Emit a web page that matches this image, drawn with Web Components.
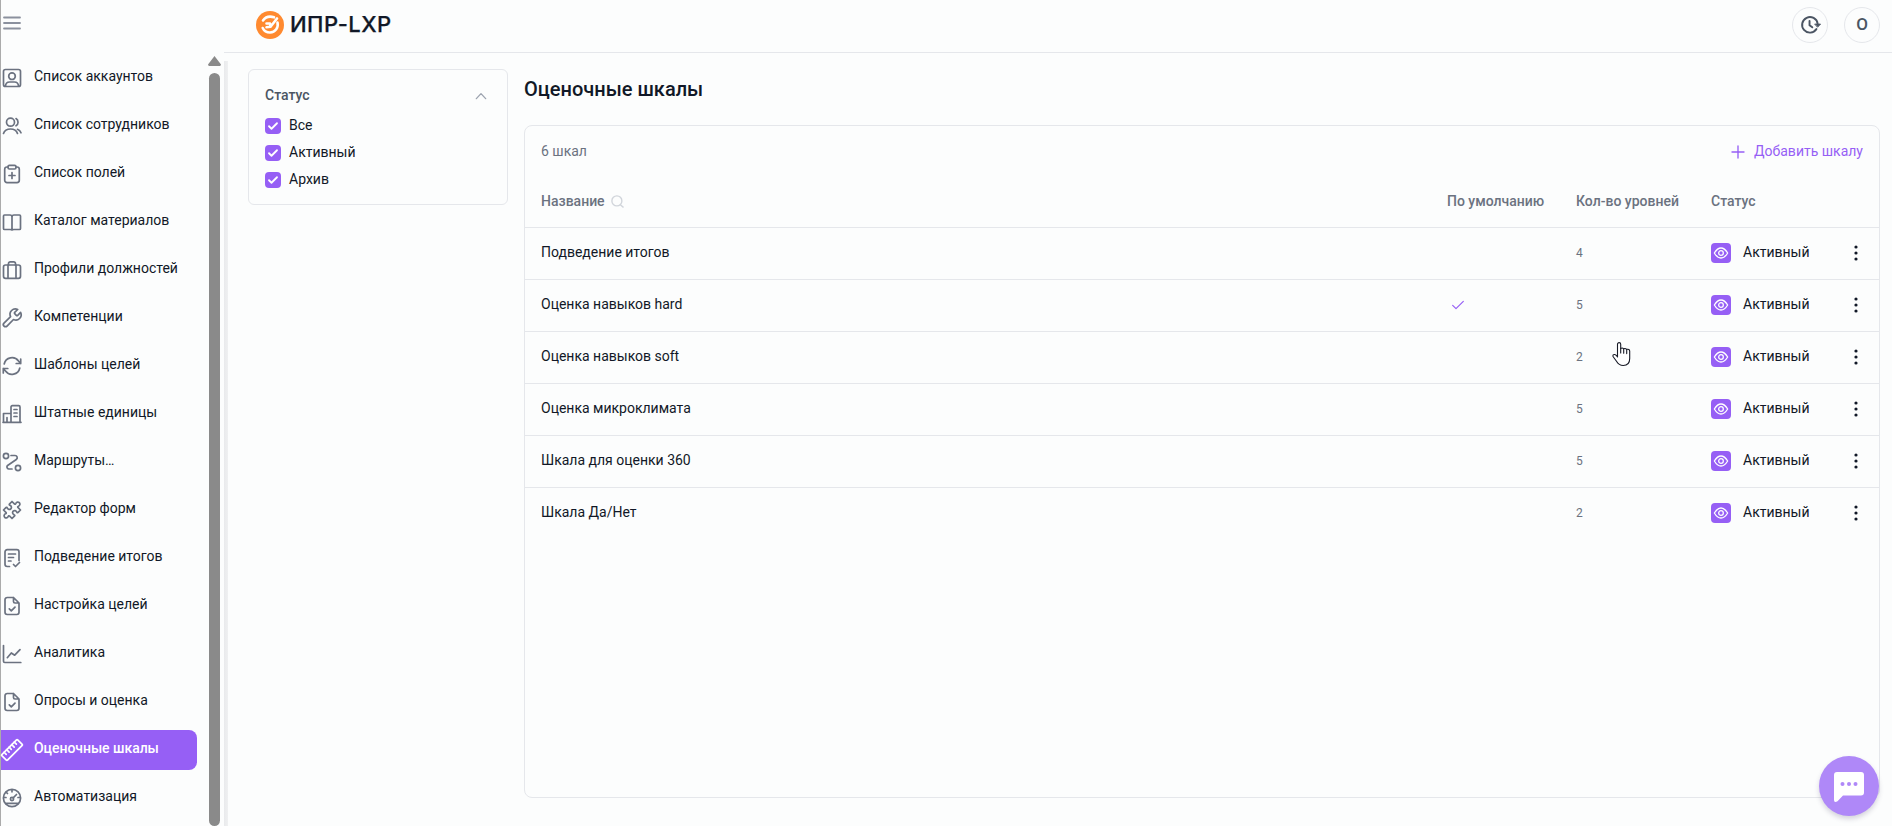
<!DOCTYPE html>
<html lang="ru">
<head>
<meta charset="UTF-8">
<title>ИПР-LXP</title>
<style>
    html, body { margin: 0; height: 100%; }
    body {
        --accent: #965ff5;
        --line: #e5e7eb;
        --text: #111827;
        --muted: #6b7280;
        background: #fcfdfd;
        color: var(--text);
        font: 14px/20px Roboto, sans-serif;
        overflow: hidden;
    }
</style>
</head>
<body>
<lxp-app>
    <lxp-sidebar slot="sidebar">
        <nav-item icon="account">Список аккаунтов</nav-item>
        <nav-item icon="users">Список сотрудников</nav-item>
        <nav-item icon="clipboard">Список полей</nav-item>
        <nav-item icon="book">Каталог материалов</nav-item>
        <nav-item icon="suitcase">Профили должностей</nav-item>
        <nav-item icon="wrench">Компетенции</nav-item>
        <nav-item icon="refresh">Шаблоны целей</nav-item>
        <nav-item icon="building">Штатные единицы</nav-item>
        <nav-item icon="route">Маршруты…</nav-item>
        <nav-item icon="puzzle">Редактор форм</nav-item>
        <nav-item icon="report">Подведение итогов</nav-item>
        <nav-item icon="file">Настройка целей</nav-item>
        <nav-item icon="chart">Аналитика</nav-item>
        <nav-item icon="file">Опросы и оценка</nav-item>
        <nav-item icon="ruler" active>Оценочные шкалы</nav-item>
        <nav-item icon="gauge">Автоматизация</nav-item>
    </lxp-sidebar>
    <lxp-header slot="header">ИПР-LXP</lxp-header>
    <filter-card slot="filter" label="Статус">
        <check-option>Все</check-option>
        <check-option>Активный</check-option>
        <check-option>Архив</check-option>
    </filter-card>
    <scale-table>
        <scale-row levels="4">Подведение итогов</scale-row>
        <scale-row levels="5" default>Оценка навыков hard</scale-row>
        <scale-row levels="2">Оценка навыков soft</scale-row>
        <scale-row levels="5">Оценка микроклимата</scale-row>
        <scale-row levels="5">Шкала для оценки 360</scale-row>
        <scale-row levels="2">Шкала Да/Нет</scale-row>
    </scale-table>
</lxp-app>
<chat-button></chat-button>
<hand-cursor></hand-cursor>

<script>
const ICONS = {
    menu: '<path d="M4 6.500h16M4 12h16M4 17.500h16"/>',
    account: '<rect x="3.5" y="3.5" width="17" height="17" rx="2"/><circle cx="12" cy="10.2" r="3.3"/><path d="M5.5 20c.2-2.400 1.800-4 4-4h5c2.200 0 3.800 1.600 4 4"/>',
    users: '<circle cx="10.500" cy="8.200" r="4"/><path d="M16 4.600a4.200 4.200 0 0 1 0 7.200M3.500 19.500c1-3 3.700-4.500 7-4.500s6 1.500 7 4.500M17.500 15.300c1.700.6 2.800 1.700 3.500 3.500"/>',
    clipboard: '<path d="M8 5H7a2.300 2.300 0 0 0-2.300 2.300v11A2.300 2.300 0 0 0 7 20.600h10a2.300 2.300 0 0 0 2.300-2.300v-11A2.300 2.300 0 0 0 17 5h-1"/><rect x="8" y="3.400" width="8" height="3.600" rx="1.400"/><path d="M12 10.500v6M9 13.500h6"/>',
    book: '<path d="M12 7c0-1.200-.9-2-2-2H4.500a1 1 0 0 0-1 1v12.500a1 1 0 0 0 1 1H10c1.200 0 2 .2 2 .5 0-.3.800-.5 2-.5h5.500a1 1 0 0 0 1-1V6a1 1 0 0 0-1-1H14c-1.100 0-2 .8-2 2zm0 0v12.500"/>',
    suitcase: '<rect x="3.500" y="7" width="17" height="13.300" rx="2"/><path d="M8.500 7V5.500a1.700 1.700 0 0 1 1.700-1.700h3.600a1.700 1.700 0 0 1 1.700 1.700V7M8 7v13M16 7v13"/>',
    wrench: '<path d="M14.700 6.300a1 1 0 0 0 0 1.400l1.600 1.600a1 1 0 0 0 1.400 0l2.900-2.900a5.300 5.300 0 0 1-7.100 7.100l-6.500 6.600a2.050 2.050 0 0 1-3-3l6.600-6.500a5.300 5.300 0 0 1 7.100-7.100z"/>',
    refresh: '<path d="M20.700 5v4.500h-4.500M3.300 19v-4.500h4.500M4.200 10A8 8 0 0 1 18.500 7l2.200 2.500M3.300 14.500L5.500 17a8 8 0 0 0 14.300-3"/>',
    building: '<path d="M3.500 20.300V11.500h7M3 20.300h18M11 20.300V5a1.300 1.300 0 0 1 1.300-1.300h6.400A1.300 1.300 0 0 1 20 5v15.300M7 20v-4.500M14 7.500h3M14 11h3M14 14.500h3"/>',
    route: '<circle cx="6" cy="6" r="2.600"/><circle cx="18" cy="18" r="2.600"/><path d="M11 5.500h4a2.200 2.200 0 0 1 1.300 4l-8.700 6a2 2 0 0 0 1.100 3.500H12"/>',
    puzzle: '<path transform="rotate(45 12 12)" d="M6 6H9.700q.8-.2.4-1.300a2.100 2.100 0 1 1 3.800 0q-.4 1.100.4 1.300H18V9.700q-.2.8-1.300.4a2.100 2.100 0 1 0 0 3.800q1.100-.4 1.300.4V18H14.300q-.8.2-.4 1.300a2.100 2.100 0 1 1-3.800 0q.4-1.100-.4-1.300H6V14.300q.2-.8 1.300-.4a2.100 2.100 0 1 0 0-3.800q-1.100.4-1.300-.4z"/>',
    report: '<path d="M9.500 20.500H7.200A2.200 2.200 0 0 1 5 18.300V5.900a2.200 2.200 0 0 1 2.200-2.200h9.600A2.200 2.200 0 0 1 19 5.900v8.600M8.500 8h7M8.500 11.500h5M8.500 15h2.500M13.500 18.500l2 2 4-4"/>',
    file: '<path d="M13.500 3.500H7.200A2.200 2.200 0 0 0 5 5.700v12.600a2.200 2.200 0 0 0 2.200 2.200h9.600a2.200 2.200 0 0 0 2.200-2.200V9l-5.500-5.500V7.500A1.500 1.500 0 0 0 15 9h4M9.300 14.800l2 2 3.700-3.700"/>',
    chart: '<path d="M3.500 3.500v15.700a1.300 1.300 0 0 0 1.300 1.300h16M7.300 15.700l4-4.700 3.400 2.200 5.300-5.600"/>',
    ruler: '<g transform="rotate(-45 12 12)"><rect x=".8" y="8" width="22.400" height="8" rx=".8"/><path d="M4.800 8v3M8.400 8v3.500M12 8v3M15.600 8v3.500M19.200 8v3"/></g>',
    gauge: '<circle cx="12" cy="12" r="8.600"/><circle cx="12" cy="13" r="1.600"/><path d="M13.200 11.800l3.300-3.300M12 3.800v2M4 11.500h2M18 11.500h2M6.300 6.300l1.200 1.200M6.500 17.300h11"/>',
    chevron: '<path d="M5 16l7-7.500 7 7.500"/>',
    search: '<circle cx="11" cy="11" r="8"/><path d="M17 17.500l4 3.500"/>',
    plus: '<path d="M12 4v16M4 12h16"/>',
    check: '<path d="M4 12.500l5 5L20 6.500"/>',
    eye: '<path d="M2 12c3-5 6.300-7.500 10-7.500S19 7 22 12c-3 5-6.300 7.500-10 7.500S5 17 2 12z"/><circle cx="12" cy="12" r="3.500"/>',
    clock: '<path d="M19 16.500A8.500 8.500 0 1 1 20.300 10.500M11.500 7.500v4.700l3 2.300"/><path fill="currentColor" stroke-width="1" d="M17.500 11h6l-3 3.200z"/>'
};

function icon(name, size = 24, width = 1.7) {
    return `<svg width="${size}" height="${size}" viewBox="0 0 24 24" fill="none" stroke="currentColor" stroke-width="${width}" stroke-linecap="round" stroke-linejoin="round">${ICONS[name]}</svg>`;
}

class LxpApp extends HTMLElement {
    constructor() {
        super();
        this.attachShadow({ mode: 'open' });
        this.shadowRoot.innerHTML = `
            <style>
                :host {
                    display: grid;
                    grid-template-columns: 223px 1fr;
                    height: 100vh;
                    border-left: 1px solid #ababab;
                    box-sizing: border-box;
                }
                .page { display: flex; flex-direction: column; min-width: 0; }
                .body { flex: 1; display: flex; min-height: 0; }
                .edge {
                    width: 4px;
                    margin-top: 8px;
                    background: linear-gradient(90deg, #e9eaec, #eff0f1);
                }
                .content { flex: 1; display: flex; gap: 16px; padding: 16px 12px 28px 20px; }
                .main { flex: 1; display: flex; flex-direction: column; }
                h1 {
                    margin: 0;
                    padding: 7px 0 22px;
                    font-size: 20px;
                    line-height: 27px;
                    font-weight: 500;
                }
            </style>
            <slot name="sidebar"></slot>
            <div class="page">
                <slot name="header"></slot>
                <div class="body">
                    <div class="edge"></div>
                    <div class="content">
                        <slot name="filter"></slot>
                        <div class="main">
                            <h1>Оценочные шкалы</h1>
                            <slot></slot>
                        </div>
                    </div>
                </div>
            </div>
        `;
    }
}

class LxpSidebar extends HTMLElement {
    constructor() {
        super();
        this.attachShadow({ mode: 'open' });
        this.shadowRoot.innerHTML = `
            <style>
                :host { display: flex; flex-direction: column; height: 100vh; }
                .top { height: 46px; color: #8b919e; padding-top: 11px; box-sizing: border-box; }
                .top svg { display: block; margin-left: -1px; }
                .scroll { flex: 1; display: flex; justify-content: space-between; min-height: 0; }
                nav {
                    display: flex;
                    flex-direction: column;
                    gap: 8px;
                    width: 196px;
                    padding-top: 12px;
                }
                .bar {
                    display: flex;
                    flex-direction: column;
                    align-items: center;
                    gap: 7px;
                    padding: 10px 3px 0 0;
                }
                .arrow {
                    width: 13px;
                    height: 10px;
                    background: #8a8a8a;
                    clip-path: polygon(50% 0, 100% 85%, 94% 100%, 6% 100%, 0 85%);
                }
                .thumb { width: 11px; flex: 1; border-radius: 6px; background: #8a8a8a; }
            </style>
            <div class="top">${icon('menu', 24, 1.8)}</div>
            <div class="scroll">
                <nav><slot></slot></nav>
                <div class="bar"><div class="arrow"></div><div class="thumb"></div></div>
            </div>
        `;
    }
}

class NavItem extends HTMLElement {
    constructor() {
        super();
        this.attachShadow({ mode: 'open' });
        this.shadowRoot.innerHTML = `
            <style>
                :host {
                    display: flex;
                    align-items: center;
                    gap: 10px;
                    height: 40px;
                    flex: none;
                    border-radius: 0 8px 8px 0;
                    white-space: nowrap;
                }
                :host([active]) { background: var(--accent); color: #fff; font-weight: 500; letter-spacing: -.04px; }
                svg { display: block; margin-left: -1px; color: var(--muted); }
                :host([active]) svg { color: #fff; }
                span { padding-bottom: 4px; }
            </style>
            ${icon(this.getAttribute('icon'))}
            <span><slot></slot></span>
        `;
    }
}

class LxpHeader extends HTMLElement {
    constructor() {
        super();
        this.attachShadow({ mode: 'open' });
        this.shadowRoot.innerHTML = `
            <style>
                :host {
                    display: flex;
                    align-items: center;
                    gap: 16px;
                    height: 53px;
                    padding: 0 12px 3px 32px;
                    box-sizing: border-box;
                    border-bottom: 1px solid var(--line);
                }
                .brand {
                    flex: 1;
                    display: flex;
                    align-items: center;
                    gap: 6px;
                    font: 500 22px/28px Inter, sans-serif;
                    letter-spacing: .45px;
                    -webkit-text-stroke: .25px currentColor;
                }
                .brand span { padding-bottom: 2px; }
                .round {
                    display: grid;
                    place-items: center;
                    width: 36px;
                    height: 36px;
                    box-sizing: border-box;
                    border: 1px solid var(--line);
                    border-radius: 50%;
                    color: #4b5563;
                    font-weight: 500;
                    font-size: 17px;
                }
                .round svg { display: block; }
                .round span { padding-bottom: 2px; }
            </style>
            <div class="brand">
                <svg width="28" height="28" viewBox="0 0 28 28" fill="none" stroke="#fff" stroke-width="2.6" stroke-linecap="round" stroke-linejoin="round">
                    <circle cx="14" cy="14" r="14" fill="#ff8a30" stroke="none"/>
                    <path d="M7 9.500C9.500 6 14 5 18 6.300M21.500 11.500c1.200 5-2 9.900-7.500 10-3.500 0-6-1.700-7.300-4.500"/>
                    <path d="M10.500 12.500h3.500l.5 3.300 6.500-8.300M10.500 16.200l4-.4"/>
                </svg>
                <span><slot></slot></span>
            </div>
            <div class="round">${icon('clock', 22, 2.1)}</div>
            <div class="round"><span>О</span></div>
        `;
    }
}

class FilterCard extends HTMLElement {
    constructor() {
        super();
        this.attachShadow({ mode: 'open' });
        this.shadowRoot.innerHTML = `
            <style>
                :host {
                    display: block;
                    width: 260px;
                    height: 136px;
                    flex: none;
                    box-sizing: border-box;
                    padding: 15px 16px;
                    border: 1px solid var(--line);
                    border-radius: 6px;
                }
                .title {
                    display: flex;
                    justify-content: space-between;
                    align-items: center;
                    margin-bottom: 10px;
                    padding-right: 2px;
                    color: #4b5563;
                    font-weight: 500;
                }
                .title svg { display: block; color: #9ca3af; margin-top: 2px; }
                .list { display: flex; flex-direction: column; gap: 7px; }
            </style>
            <div class="title"><span>${this.getAttribute('label')}</span>${icon('chevron', 16, 2)}</div>
            <div class="list"><slot></slot></div>
        `;
    }
}

class CheckOption extends HTMLElement {
    constructor() {
        super();
        this.attachShadow({ mode: 'open' });
        this.shadowRoot.innerHTML = `
            <style>
                :host { display: flex; align-items: center; gap: 8px; height: 20px; }
                .box {
                    display: grid;
                    place-items: center;
                    width: 16px;
                    height: 16px;
                    margin-top: 2px;
                    border-radius: 4px;
                    background: var(--accent);
                    color: #fff;
                }
                svg { display: block; }
            </style>
            <div class="box">${icon('check', 12, 3.6)}</div>
            <slot></slot>
        `;
    }
}

class ScaleTable extends HTMLElement {
    constructor() {
        super();
        this.attachShadow({ mode: 'open' });
        this.shadowRoot.innerHTML = `
            <style>
                :host {
                    display: block;
                    flex: 1;
                    border: 1px solid var(--line);
                    border-radius: 8px;
                    --columns: 890px 113px 119px 119px 1fr;
                }
                .bar {
                    display: flex;
                    justify-content: space-between;
                    align-items: center;
                    height: 50px;
                    padding: 0 16px;
                    color: var(--muted);
                }
                .add { display: flex; align-items: center; gap: 7px; color: var(--accent); }
                .add svg { margin-top: 1px; }
                .head {
                    display: grid;
                    grid-template-columns: var(--columns);
                    column-gap: 16px;
                    align-items: center;
                    height: 51px;
                    padding: 0 16px 2px;
                    box-sizing: border-box;
                    color: var(--muted);
                    font-weight: 500;
                }
                .name { display: flex; align-items: center; gap: 5px; }
                .name svg { color: #d1d5db; margin-top: 2px; }
                svg { display: block; }
            </style>
            <div class="bar">
                <span>6 шкал</span>
                <div class="add">${icon('plus', 18, 1.8)}<span>Добавить шкалу</span></div>
            </div>
            <div class="head">
                <div class="name">Название ${icon('search', 15, 2.2)}</div>
                <div>По умолчанию</div>
                <div>Кол-во уровней</div>
                <div>Статус</div>
            </div>
            <slot></slot>
        `;
    }
}

class ScaleRow extends HTMLElement {
    constructor() {
        super();
        this.attachShadow({ mode: 'open' });
        this.shadowRoot.innerHTML = `
            <style>
                :host {
                    display: grid;
                    grid-template-columns: var(--columns);
                    column-gap: 16px;
                    align-items: center;
                    height: 52px;
                    box-sizing: border-box;
                    padding: 0 16px 1px;
                    border-top: 1px solid var(--line);
                }
                svg { display: block; }
                .name { padding-bottom: 2px; }
                .default { color: var(--accent); padding: 0 0 1px 2.500px; }
                .levels { color: var(--muted); font-size: 12px; }
                .status { display: flex; align-items: center; gap: 12px; }
                .status span { padding-bottom: 2px; }
                .badge {
                    display: grid;
                    place-items: center;
                    width: 20px;
                    height: 20px;
                    border-radius: 4px;
                    background: var(--accent);
                    color: #fff;
                }
                .more { display: block; justify-self: end; margin-right: 5px; }
            </style>
            <div class="name"><slot></slot></div>
            <div class="default">${this.hasAttribute('default') ? icon('check', 16, 1.8) : ''}</div>
            <div class="levels">${this.getAttribute('levels')}</div>
            <div class="status"><div class="badge">${icon('eye', 16, 1.9)}</div><span>Активный</span></div>
            <svg class="more" width="4" height="16" viewBox="0 0 4 16" fill="#111827"><circle cx="2" cy="2" r="1.600"/><circle cx="2" cy="8" r="1.600"/><circle cx="2" cy="14" r="1.600"/></svg>
        `;
    }
}

class ChatButton extends HTMLElement {
    constructor() {
        super();
        this.attachShadow({ mode: 'open' });
        this.shadowRoot.innerHTML = `
            <style>
                :host {
                    position: fixed;
                    right: 13px;
                    bottom: 10px;
                    width: 60px;
                    height: 60px;
                    border-radius: 50%;
                    background: #af88f8;
                    box-shadow: 0 3px 5px rgba(60, 50, 90, .2);
                    display: grid;
                    place-items: center;
                }
                svg { display: block; margin-top: 2px; }
            </style>
            <svg width="30" height="30" viewBox="0 0 30 30">
                <path fill="#fff" d="M3 0h24a3 3 0 0 1 3 3v17.500a3 3 0 0 1-3 3H9l-5.500 5.800Q0 31 0 28V3a3 3 0 0 1 3-3z"/>
                <g fill="#af88f8"><circle cx="8.500" cy="12" r="2"/><circle cx="15" cy="12" r="2"/><circle cx="21.500" cy="12" r="2"/></g>
            </svg>
        `;
    }
}

class HandCursor extends HTMLElement {
    constructor() {
        super();
        this.attachShadow({ mode: 'open' });
        this.shadowRoot.innerHTML = `
            <style>
                :host { position: fixed; left: 1612px; top: 342px; }
                svg { display: block; }
            </style>
            <svg width="19" height="25" viewBox="0 0 19 25" fill="#fff" stroke="#171a26" stroke-width="1.100" stroke-linejoin="round" stroke-linecap="round">
                <path d="M5.500 15V2.200a1.600 1.600 0 0 1 3.200 0V6.500q1.500-1.200 3 .3 1.600-.9 3 .6 2.800-.5 3 1.600v7.500c0 4.500-2.500 7-6.500 7-3.200 0-5-1.200-6.700-4.200L1 14.500q-.5-2.200 1.800-2 1.700.5 2.700 2.500z"/>
                <path d="M8.700 6.500V11M11.700 7v4.200M14.700 7.600v4"/>
            </svg>
        `;
    }
}

customElements.define('lxp-app', LxpApp);
customElements.define('lxp-sidebar', LxpSidebar);
customElements.define('nav-item', NavItem);
customElements.define('lxp-header', LxpHeader);
customElements.define('filter-card', FilterCard);
customElements.define('check-option', CheckOption);
customElements.define('scale-table', ScaleTable);
customElements.define('scale-row', ScaleRow);
customElements.define('chat-button', ChatButton);
customElements.define('hand-cursor', HandCursor);
</script>
</body>
</html>
